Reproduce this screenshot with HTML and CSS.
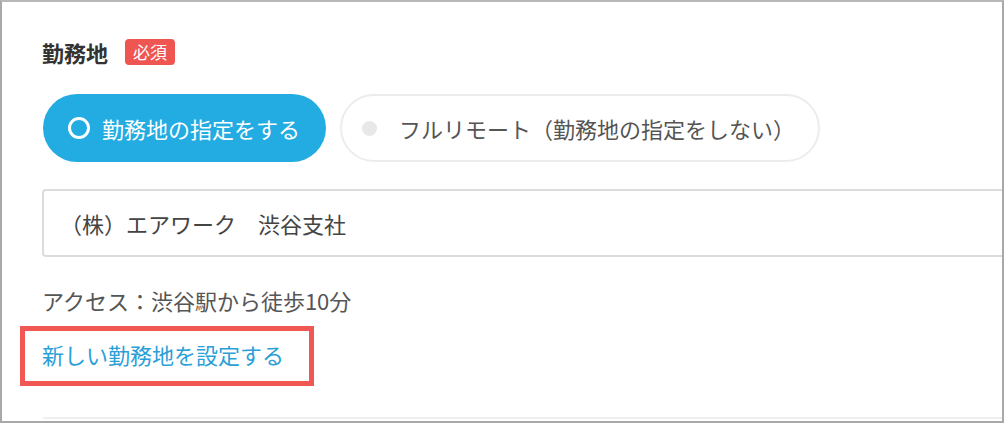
FILE: index.html
```html
<!DOCTYPE html>
<html lang="ja">
<head>
<meta charset="utf-8">
<title>勤務地</title>
<link rel="stylesheet" href="styles.css">
</head>
<body>
<div class="frame">
  <div class="content">
    <div class="title-row">
      <span class="title">勤務地</span>
      <span class="badge">必須</span>
    </div>
    <div class="options">
      <div class="option option-active">
        <span class="radio radio-on"></span>
        <span class="option-label">勤務地の指定をする</span>
      </div>
      <div class="option option-off">
        <span class="radio radio-off"></span>
        <span class="option-label">フルリモート（勤務地の指定をしない）</span>
      </div>
    </div>
    <div class="field">（株）エアワーク　渋谷支社</div>
    <p class="access">アクセス：渋谷駅から徒歩10分</p>
    <div class="link-row">
      <a class="link" href="#">新しい勤務地を設定する</a>
    </div>
    <div class="divider"></div>
  </div>
</div>
</body>
</html>
```

FILE: styles.css
```css
* { box-sizing: border-box; }
html, body { margin: 0; padding: 0; background: #fff; }
body {
  font-family: "Noto Sans CJK JP", "Noto Sans", sans-serif;
  color: #333;
}
.frame {
  width: 1004px;
  height: 423px;
  border: 2px solid #a9a9a9;
  border-top-color: #b8b8b8;
  overflow: hidden;
  background: #fff;
}
.content {
  padding-left: 40px;
  display: flex;
  flex-direction: column;
  align-items: flex-start;
}
.title-row {
  margin-top: 37px;
  height: 26px;
  display: flex;
  align-items: center;
  gap: 17px;
}
.title {
  font-size: 22px;
  font-weight: 700;
  color: #333;
  line-height: 26px;
}
.badge {
  background: #ef5551;
  color: #fff;
  font-size: 17px;
  line-height: 26px;
  height: 26px;
  padding: 0 8px;
  border-radius: 4px;
}
.options {
  margin-top: 29px;
  display: flex;
  gap: 14px;
}
.option {
  height: 68px;
  border-radius: 34px;
  display: flex;
  align-items: center;
  font-size: 22px;
}
.option-active {
  background: #22ace2;
  color: #fff;
  padding: 0 26px 0 25px;
  margin-left: 1px;
}
.option-off {
  border: 2px solid #ececec;
  color: #555;
  padding: 0 23px 0 20px;
}
.radio {
  display: inline-block;
  border-radius: 50%;
  flex: none;
}
.radio-on {
  width: 22px;
  height: 22px;
  border: 3px solid #fff;
  margin-right: 12px;
}
.radio-off {
  width: 15px;
  height: 15px;
  background: #e8e8e8;
  margin-right: 22px;
}
.field {
  margin-top: 27px;
  width: 990px;
  height: 68px;
  border: 2px solid #dcdcdc;
  border-radius: 4px;
  padding-left: 16px;
  display: flex;
  align-items: center;
  font-size: 22px;
  color: #444;
}
.access {
  margin: 28px 0 0;
  font-size: 22px;
  line-height: 30px;
  color: #555;
}
.link-row {
  margin-top: 24px;
  position: relative;
  line-height: 30px;
}
.link {
  font-size: 22px;
  color: #2a9fd8;
  text-decoration: none;
}
.link-row::after {
  content: "";
  position: absolute;
  left: -22px;
  top: -13px;
  right: -30px;
  bottom: -14px;
  border: 5px solid #f25853;
}
.divider {
  margin-top: 45px;
  margin-left: 1px;
  width: 990px;
  border-top: 2px solid #efefef;
}
```
